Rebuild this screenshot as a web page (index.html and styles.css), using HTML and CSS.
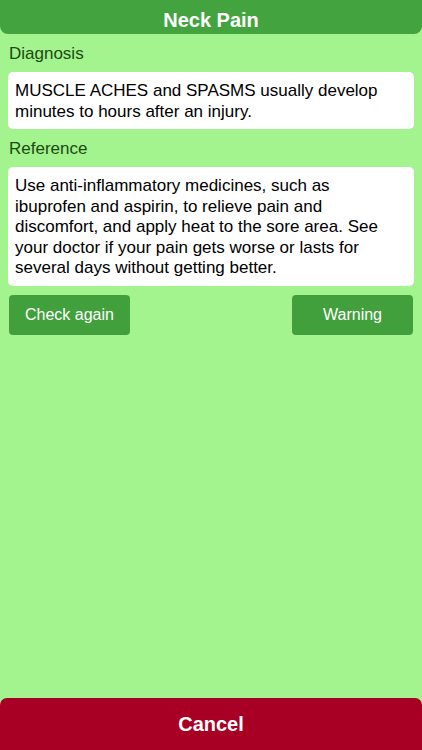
FILE: index.html
```html
<!DOCTYPE html>
<html>
<head>
<meta charset="utf-8">
<link rel="stylesheet" href="styles.css">
</head>
<body>
<div class="screen">
  <header class="topbar">Neck Pain</header>
  <main class="content">
    <div class="label">Diagnosis</div>
    <div class="box">MUSCLE ACHES and SPASMS usually develop minutes to hours after an injury.</div>
    <div class="label">Reference</div>
    <div class="box">Use anti-inflammatory medicines, such as ibuprofen and aspirin, to relieve pain and discomfort, and apply heat to the sore area. See your doctor if your pain gets worse or lasts for several days without getting better.</div>
    <div class="actions">
      <button class="btn">Check again</button>
      <button class="btn">Warning</button>
    </div>
  </main>
  <button class="cancel">Cancel</button>
</div>
</body>
</html>
```

FILE: styles.css
```css
html, body {
  margin: 0;
  padding: 0;
}
body {
  background: #a3f38f;
  font-family: "Liberation Sans", Arial, sans-serif;
}
.screen {
  width: 422px;
  height: 750px;
  display: flex;
  flex-direction: column;
}
.topbar {
  box-sizing: border-box;
  height: 34px;
  padding-top: 7px;
  background: #43a33e;
  color: #fff;
  font-weight: bold;
  font-size: 20px;
  line-height: 27px;
  text-align: center;
  border-radius: 0 0 8px 8px;
}
.content {
  padding: 0 8px;
  display: flex;
  flex-direction: column;
}
.label {
  margin-top: 10px;
  font-size: 17px;
  line-height: 20px;
  color: #1c4a10;
  padding-left: 1px;
  margin-bottom: 8px;
}
.box {
  background: #fff;
  border-radius: 5px;
  padding: 9px 16px 7px 7px;
  font-size: 17px;
  line-height: 20.5px;
  color: #000;
}
.actions {
  display: flex;
  justify-content: space-between;
  margin-top: 9px;
  padding: 0 1px;
}
.btn {
  width: 121px;
  height: 40px;
  border: none;
  border-radius: 4px;
  background: #41a03b;
  color: #fff;
  font-family: "Liberation Sans", Arial, sans-serif;
  font-size: 16px;
  padding: 0;
}
.cancel {
  margin-top: auto;
  height: 52px;
  border: none;
  border-radius: 7px 7px 0 0;
  background: #a80024;
  color: #fff;
  font-family: "Liberation Sans", Arial, sans-serif;
  font-size: 20px;
  font-weight: bold;
  padding: 0;
}
```
